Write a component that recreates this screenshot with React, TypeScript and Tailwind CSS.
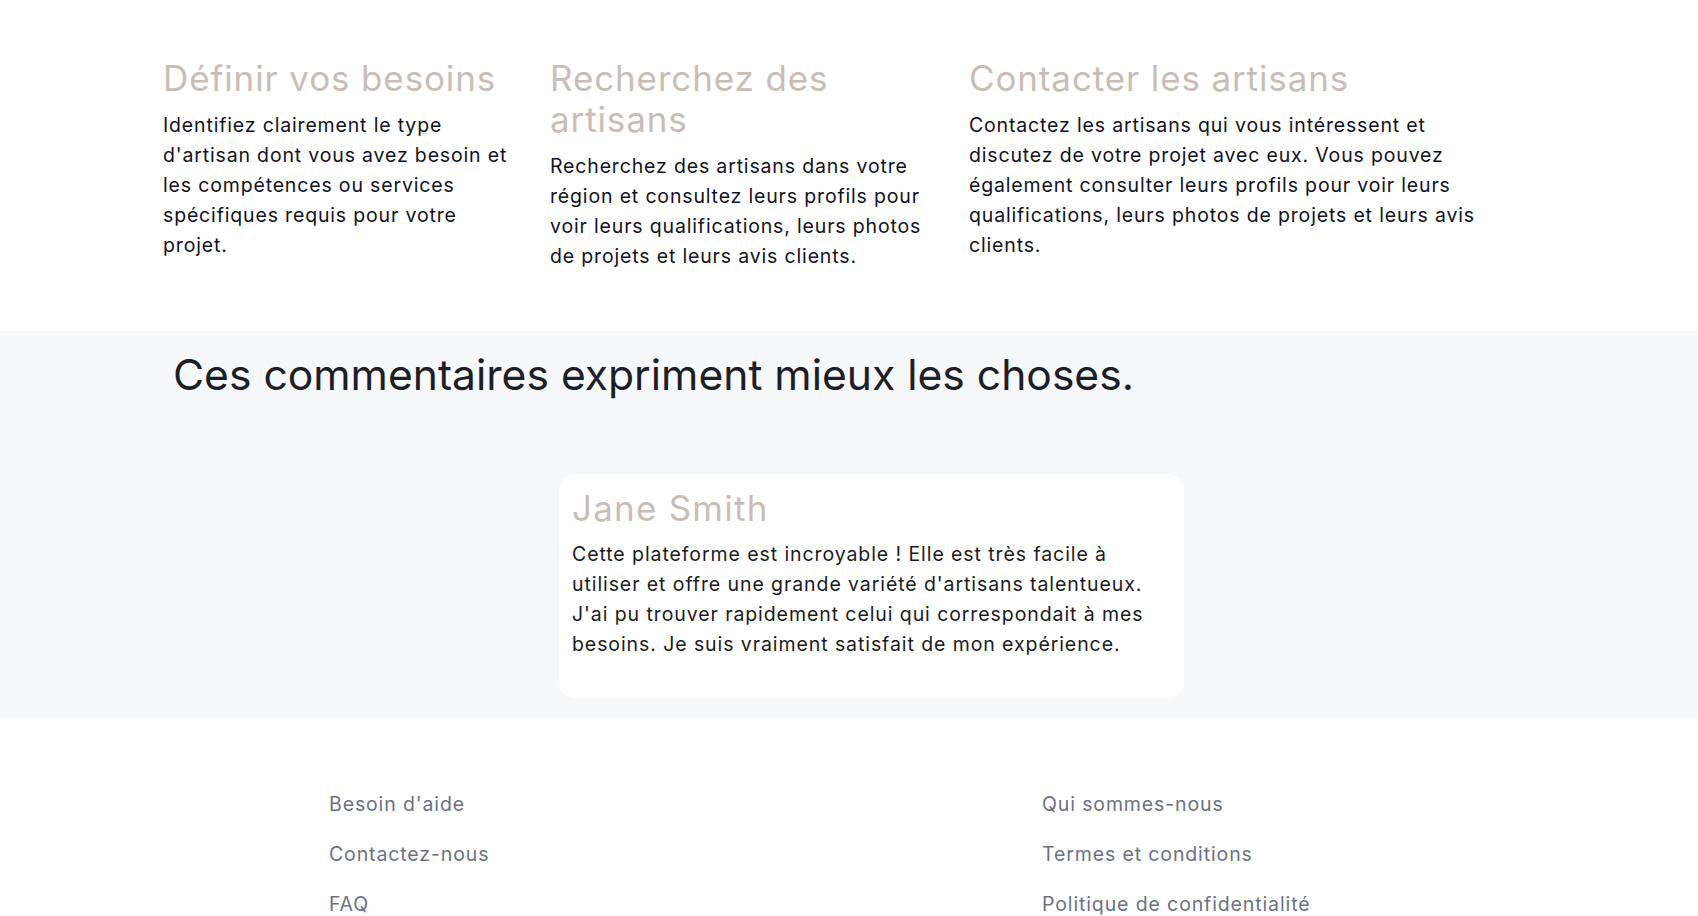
import React from "react";

const steps = [
  {
    title: ["Définir vos besoins"],
    body: [
      "Identifiez clairement le type",
      "d'artisan dont vous avez besoin et",
      "les compétences ou services",
      "spécifiques requis pour votre",
      "projet.",
    ],
    w: "w-[387px]",
  },
  {
    title: ["Recherchez des", "artisans"],
    body: [
      "Recherchez des artisans dans votre",
      "région et consultez leurs profils pour",
      "voir leurs qualifications, leurs photos",
      "de projets et leurs avis clients.",
    ],
    w: "w-[419px]",
  },
  {
    title: ["Contacter les artisans"],
    body: [
      "Contactez les artisans qui vous intéressent et",
      "discutez de votre projet avec eux. Vous pouvez",
      "également consulter leurs profils pour voir leurs",
      "qualifications, leurs photos de projets et leurs avis",
      "clients.",
    ],
    w: "w-[560px]",
  },
];

const review = [
  "Cette plateforme est incroyable ! Elle est très facile à",
  "utiliser et offre une grande variété d'artisans talentueux.",
  "J'ai pu trouver rapidement celui qui correspondait à mes",
  "besoins. Je suis vraiment satisfait de mon expérience.",
];

export default function App() {
  return (
    <div
      className="min-h-screen bg-white"
      style={{ fontFamily: "Inter, 'Noto Sans', sans-serif" }}
    >
      {/* Steps */}
      <section className="flex pl-[163px] pt-[58px] h-[331px]">
        {steps.map((s, i) => (
          <div key={i} className={`${s.w} shrink-0`}>
            <h3 className="text-[35px] leading-[41px] text-[#c8beb7] tracking-[0.025em]">
              {s.title.map((t, j) => (
                <span key={j} className="block whitespace-nowrap">
                  {t}
                </span>
              ))}
            </h3>
            <p className="mt-[11px] text-[19.5px] leading-[30px] text-[#10131d] tracking-[0.043em]">
              {s.body.map((t, j) => (
                <span key={j} className="block whitespace-nowrap">
                  {t}
                </span>
              ))}
            </p>
          </div>
        ))}
      </section>

      {/* Reviews */}
      <section className="bg-[#f7f8fa] h-[387px] pt-[20px]">
        <h2 className="pl-[173px] text-[42.6px] leading-[48px] text-[#1c2026] whitespace-nowrap">
          Ces commentaires expriment mieux les choses.
        </h2>
        <div className="ml-[559px] mt-[75px] w-[625px] h-[224px] rounded-2xl bg-white px-[13px] pt-[14px]">
          <h4 className="text-[35px] leading-[41px] text-[#c8beb7] tracking-[0.035em]">
            Jane Smith
          </h4>
          <p className="mt-[10px] text-[19.5px] leading-[30px] text-[#191c23] tracking-[0.047em]">
            {review.map((t, j) => (
              <span key={j} className="block whitespace-nowrap">
                {t}
              </span>
            ))}
          </p>
        </div>
      </section>

      {/* Footer */}
      <footer className="flex pl-[329px] pt-[72px] pb-10">
        <ul className="w-[713px] shrink-0 flex flex-col gap-[22px] text-[19.5px] leading-[28px] text-[#6b7280] tracking-[0.045em]">
          <li>Besoin d'aide</li>
          <li>Contactez-nous</li>
          <li>FAQ</li>
        </ul>
        <ul className="flex flex-col gap-[22px] text-[19.5px] leading-[28px] text-[#6b7280] tracking-[0.045em]">
          <li>Qui sommes-nous</li>
          <li>Termes et conditions</li>
          <li>Politique de confidentialité</li>
        </ul>
      </footer>
    </div>
  );
}
